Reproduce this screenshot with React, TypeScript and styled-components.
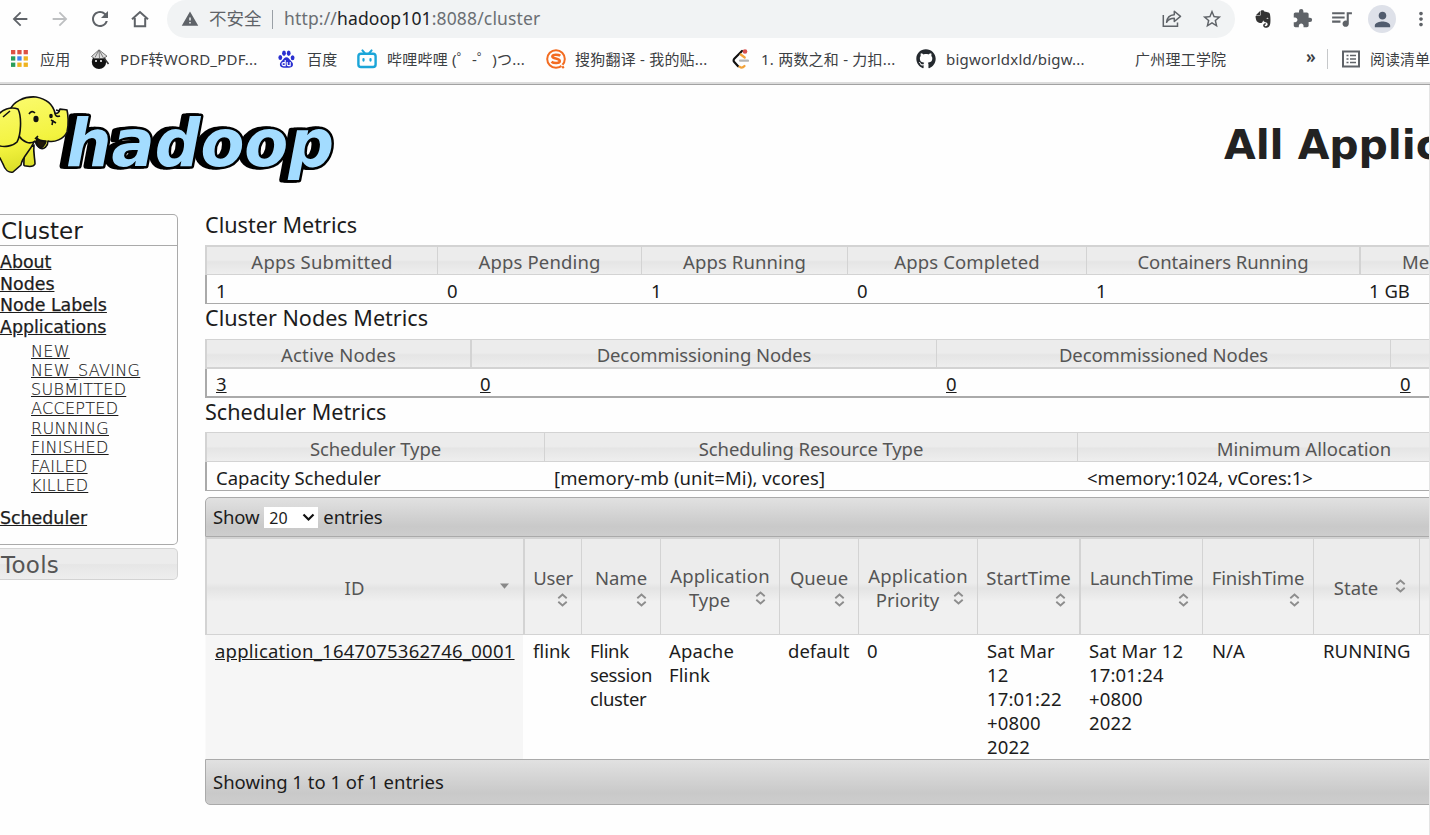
import React from "react";
import styled, { createGlobalStyle } from "styled-components";
import {
  MdArrowBack,
  MdArrowForward,
  MdRefresh,
  MdWarning,
  MdStarBorder,
  MdExtension,
  MdQueueMusic,
  MdPerson,
  MdMoreVert,
} from "react-icons/md";
import { FaEvernote, FaGithub } from "react-icons/fa";

const UI = `"Noto Sans", "Noto Sans CJK SC", sans-serif`;
const VERDANA = `"DejaVu Sans", sans-serif`;

const GlobalStyle = createGlobalStyle`
  * { box-sizing: border-box; }
  html, body { margin: 0; padding: 0; height: 835px; overflow: hidden; background: #fff; }
  body { font-family: ${UI}; color: #1c1c1c; }
  a { color: inherit; }
  svg { display: block; flex: none; }
`;

const Window = styled.div`
  width: 1430px;
  height: 835px;
  overflow: hidden;
  display: flex;
  flex-direction: column;
  background: #fefefe;
`;

/* ---------- browser chrome ---------- */

const NavBar = styled.div`
  height: 38px;
  display: flex;
  align-items: center;
  flex: none;
  color: #5f6368;
`;

const NavButton = styled.span<{ $w: number; $dim?: boolean }>`
  width: ${(p) => p.$w}px;
  height: 38px;
  padding-bottom: 1px;
  display: flex;
  align-items: center;
  justify-content: center;
  flex: none;
  color: ${(p) => (p.$dim ? "#bdbfc1" : "#5f6368")};
`;

const AddressBar = styled.div`
  width: 1068px;
  height: 38px;
  margin-left: 7px;
  padding-left: 14px;
  background: #f1f3f4;
  border-radius: 19px;
  display: flex;
  align-items: center;
  flex: none;
  white-space: nowrap;
`;

const Insecure = styled.span`
  margin-left: 10px;
  width: 63px;
  padding-bottom: 2px;
  font-size: 17.5px;
  line-height: 36px;
  color: #5f6368;
`;

const UrlDivider = styled.span`
  width: 1px;
  height: 19px;
  background: #9aa0a6;
`;

const Url = styled.span`
  flex: 1;
  margin-left: 11px;
  padding-bottom: 2px;
  font-size: 17.5px;
  letter-spacing: 0.15px;
  color: #6b6f73;
  b {
    font-weight: 400;
    color: #202124;
  }
`;

const Avatar = styled.span`
  width: 28px;
  height: 28px;
  margin: 0 14px 0 7px;
  border-radius: 50%;
  background: #dee1e9;
  color: #515c6e;
  display: flex;
  align-items: center;
  justify-content: center;
  flex: none;
`;

const BookmarkBar = styled.div`
  height: 47px;
  padding: 0 0 5px 11px;
  display: flex;
  align-items: center;
  flex: none;
  font-size: 15px;
  color: #3c4043;
  white-space: nowrap;
  border-bottom: 1px solid #a2a2a2;
  box-shadow: inset 0 -2px 0 #dcdcdc;
`;

const Bookmark = styled.span<{ $w: number }>`
  width: ${(p) => p.$w}px;
  display: flex;
  align-items: center;
  flex: none;
  letter-spacing: 0.22px;
`;

const BookmarkIcon = styled.span<{ $w?: number }>`
  width: ${(p) => p.$w ?? 30}px;
  height: 24px;
  display: flex;
  align-items: center;
`;

const More = styled.span`
  width: 22px;
  padding-bottom: 3px;
  font-size: 17px;
  line-height: 20px;
  font-weight: 600;
`;

const BarDivider = styled.span`
  width: 1px;
  height: 20px;
  margin-right: 14px;
  background: #c6c8ca;
`;

/* ---------- page ---------- */

const Page = styled.div`
  flex: 1;
  width: 1430px;
  border-right: 1px solid #e4e4e4;
  overflow: hidden;
`;

const Banner = styled.header`
  height: 129px;
  display: flex;
  justify-content: space-between;
  overflow: hidden;
`;

const Title = styled.h1`
  width: 205px;
  margin: 35px 0 0;
  font: bold 41px/50px ${VERDANA};
  letter-spacing: -0.1px;
  white-space: nowrap;
  color: #222;
`;

const Body = styled.div`
  display: flex;
`;

const Sidebar = styled.nav`
  width: 178px;
  margin-right: 27px;
  flex: none;
  font-family: ${VERDANA};
`;

const Section = styled.div`
  height: 331px;
  border: 1px solid #aaa;
  border-left: 0;
  border-radius: 0 5px 5px 0;
  overflow: hidden;
`;

const SectionTitle = styled.div`
  height: 31px;
  padding-left: 1px;
  border-bottom: 1px solid #aaa;
  font-size: 23px;
  line-height: 32px;
`;

const ClosedSection = styled.div`
  height: 32px;
  margin-top: 3px;
  padding-left: 1px;
  border: 1px solid #d3d3d3;
  border-left: 0;
  border-radius: 0 5px 5px 0;
  background: linear-gradient(#ececec 0 48%, #e6e6e6 52%, #eee);
  font-size: 23px;
  line-height: 33px;
  letter-spacing: 0.3px;
  color: #555;
`;

const Links = styled.div`
  display: flex;
  flex-direction: column;
  align-items: flex-start;
  padding-top: 6px;
  font-size: 17.4px;
  line-height: 21.7px;
  white-space: nowrap;
  text-decoration-thickness: 1px;
  a {
    -webkit-text-stroke: 0.25px #1c1c1c;
  }
`;

const SubLinks = styled.div`
  display: flex;
  flex-direction: column;
  align-items: flex-start;
  margin: 3px 0 13px 31px;
  font-size: 16px;
  line-height: 19.2px;
  font-weight: 200;
  letter-spacing: 0.3px;
  a {
    -webkit-text-stroke: 0.15px #1c1c1c;
  }
`;

const Content = styled.main`
  flex: 1;
  min-width: 0;
  overflow: hidden;
  white-space: nowrap;
  font-size: 18.5px;
`;

const Heading = styled.h3<{ $h: number; $line: number }>`
  height: ${(p) => p.$h}px;
  margin: 0;
  font-size: 21.6px;
  font-weight: 400;
  line-height: ${(p) => p.$line}px;
`;

const MetricTable = styled.div<{ $cols: string; $thick?: boolean }>`
  width: 1600px;
  display: grid;
  grid-template-columns: ${(p) => p.$cols};
  grid-template-rows: 30px ${(p) => (p.$thick ? 27 : 28)}px;
  border-bottom: ${(p) => (p.$thick ? 2 : 1)}px solid #aaa;
`;

const MetricHead = styled.div<{ $top?: number; $bottom?: number; $left?: number; $line?: number; $ls?: number }>`
  border: 0 solid #d3d3d3;
  border-width: ${(p) => `${p.$top ?? 1}px 0 ${p.$bottom ?? 1}px ${p.$left ?? 1}px`};
  &:first-child {
    border-left-width: 2px;
  }
  background: linear-gradient(#ececec 0 48%, #e5e5e5 55%, #eee);
  color: #555;
  text-align: center;
  line-height: ${(p) => p.$line ?? 29}px;
  letter-spacing: ${(p) => p.$ls ?? 0}px;
`;

const MemoryLabel = styled.span`
  display: block;
  padding-left: 41px;
  text-align: left;
`;

const MetricValue = styled.div<{ $first?: boolean; $line?: number; $ls?: number }>`
  padding-left: ${(p) => (p.$first ? 9 : 10)}px;
  border-left: ${(p) => (p.$first ? "2px solid #aaa" : "0")};
  line-height: ${(p) => p.$line ?? 31}px;
  letter-spacing: ${(p) => p.$ls ?? 0}px;
`;

const Toolbar = styled.div<{ $footer?: boolean }>`
  width: 1600px;
  height: ${(p) => (p.$footer ? 46 : 40)}px;
  margin-top: ${(p) => (p.$footer ? 0 : 6)}px;
  padding: 0 0 1px 7px;
  display: flex;
  align-items: center;
  border: 1px solid #aaa;
  border-radius: ${(p) => (p.$footer ? "0 0 5px 5px" : "5px 5px 0 0")};
  background: linear-gradient(#e1e1e1, #c9c9c9 75%, #cdcdcd);
`;

const ToolbarWord = styled.span`
  letter-spacing: -0.15px;
`;

const SelectBox = styled.span`
  width: 54px;
  height: 21px;
  margin: 2px 5px 0 5px;
  padding: 0 3px 0 5px;
  display: flex;
  align-items: center;
  justify-content: space-between;
  background: #fff;
  font-size: 16px;
`;

const AppGrid = styled.div`
  width: 1600px;
  display: grid;
  grid-template-columns: 318px 58px 79px 119px 79px 119px 102px 123px 111px 106px 386px;
  grid-template-rows: 98px 124px;
`;

const AppHead = styled.div<{ $thick?: boolean }>`
  border-left: ${(p) => (p.$thick ? 2 : 1)}px solid #d3d3d3;
  border-top: 2px solid #d3d3d3;
  border-bottom: 1px solid #d3d3d3;
  background: linear-gradient(#ececec 0 46%, #e4e4e4 52%, #f0f0f0 66%);
  color: #555;
  display: flex;
  flex-direction: column;
  justify-content: center;
  padding-top: 3px;
  line-height: 24px;
`;

const HeadLine = styled.div<{ $ls?: number }>`
  text-align: center;
  letter-spacing: ${(p) => p.$ls ?? 0}px;
`;

const SortLine = styled.div<{ $h: number }>`
  height: ${(p) => p.$h}px;
  display: flex;
  align-items: center;
  padding: 0 13px 0 3px;
`;

const SortLabel = styled.span`
  flex: 1;
  text-align: center;
`;

const SortIcon = styled.span<{ $lift: boolean }>`
  padding-bottom: ${(p) => (p.$lift ? 4 : 0)}px;
`;

const AppCell = styled.div<{ $sorted?: boolean; $pad?: number; $ls?: number }>`
  padding: 4px 0 0 ${(p) => p.$pad ?? 9}px;
  background: ${(p) => (p.$sorted ? "#f6f6f6" : "#fefefe")};
  border-left: ${(p) => (p.$sorted ? "1px solid #fafafa" : "0")};
  line-height: 24px;
  white-space: pre;
  letter-spacing: ${(p) => p.$ls ?? 0}px;
`;

/* ---------- drawings ---------- */

const HomeIcon = () => (
  <svg width="18" height="18" viewBox="0 0 18 18" fill="none" stroke="currentColor" strokeWidth="2">
    <path d="M1 9.2 9 2l8 7.2M3.8 8v8.2h10.4V8" />
  </svg>
);

const ShareIcon = () => (
  <svg width="20" height="19" viewBox="0 0 20 19" fill="none" stroke="currentColor" strokeWidth="1.5">
    <path d="M1.3 6v11.2h14.2v-3.7" />
    <path d="M4.6 13.3C5 8.5 8 6 12.3 5.700V2.200l6.200 5.200-6.200 5.100V9.300c-3.600 0-6 1.100-7.700 4z" strokeLinejoin="round" />
  </svg>
);

const AppsIcon = () => {
  const colors = ["#dd5144", "#dd5144", "#dd5144", "#2a9d5c", "#4284f0", "#efb320", "#2a9d5c", "#efb320", "#efb320"];
  return (
    <svg width="17" height="17" viewBox="0 0 17 17">
      {colors.map((c, i) => (
        <rect key={i} x={(i % 3) * 6.3} y={Math.floor(i / 3) * 6.3} width="4.3" height="4.3" fill={c} />
      ))}
    </svg>
  );
};

const PdfIcon = () => (
  <svg width="20" height="20" viewBox="0 0 20 20">
    <circle cx="9" cy="12.8" r="7.200" fill="#111" />
    <path d="M1.500 7.500 9 .8l8 6.400-3.500 2.300-9 .1z" fill="#ddd" stroke="#555" strokeWidth=".8" />
    <path d="M9 1 5 8.500M9 1l.5 8M9 1l4.500 8" stroke="#666" strokeWidth=".8" />
    <path d="m14 9 4.500 6" stroke="#333" strokeWidth="1.500" />
    <circle cx="6" cy="12" r="1" fill="#fff" />
    <circle cx="11" cy="12" r="1" fill="#fff" />
  </svg>
);

const BaiduIcon = () => (
  <svg width="17" height="18" viewBox="0 0 17 18" fill="#2a2fd0">
    <ellipse cx="2.300" cy="7.500" rx="1.900" ry="2.500" />
    <ellipse cx="6" cy="3.200" rx="1.900" ry="2.700" />
    <ellipse cx="10.700" cy="3.200" rx="1.900" ry="2.700" />
    <ellipse cx="14.600" cy="7.800" rx="1.900" ry="2.500" />
    <path d="M8.400 7.300c2 0 2.600 1.700 4.200 3.300 1.700 1.600 2.700 2.700 2.300 4.600-.5 2.200-2.400 2.500-6.500 2.500S2.600 17.500 2 15.200c-.5-2 .8-3 2.300-4.600C5.900 9 6.400 7.300 8.400 7.300z" />
    <path d="M7.200 10v5.600H5.500a1.500 1.500 0 0 1 0-3h1.700M9.200 12v2.500c0 .8.400 1.100 1.100 1.100h1.900V12" fill="none" stroke="#fff" strokeWidth="1.100" />
  </svg>
);

const BiliIcon = () => (
  <svg width="20" height="20" viewBox="0 0 20 20" fill="none" stroke="#1ba5d8" strokeWidth="2.400" strokeLinecap="round">
    <rect x="1.400" y="4.700" width="17.200" height="13.300" rx="2.600" />
    <path d="M5.400 1.400 7.600 4M14.600 1.400 12.400 4" strokeWidth="2" />
    <path d="M6.500 10v1.600M13.500 10v1.600" strokeWidth="2.200" />
  </svg>
);

const SogouIcon = () => (
  <svg width="20" height="20" viewBox="0 0 20 20" fill="none" stroke="#f36c21">
    <circle cx="10" cy="10" r="8.800" strokeWidth="2" />
    <path d="M14.300 6.800c-1.500-1.300-8-2-8 .7 0 2.600 7.500 1.500 7.500 4.500 0 2.800-6.400 2.400-8.300.7" strokeWidth="2.500" />
    <path d="m15.200 15.500 2.500 3" stroke="#fff" strokeWidth="1.500" />
    <circle cx="17" cy="18.300" r="1.200" fill="#f36c21" stroke="none" />
  </svg>
);

const LeetIcon = () => (
  <svg width="17" height="20" viewBox="0 0 17 20" fill="none" strokeLinecap="round" strokeWidth="2.200">
    <path d="m10 2-7.500 7.500c-1.200 1.200-1.200 2.600 0 3.800l3.600 4" stroke="#111" />
    <path d="M7.500 17.700c1.500 1.200 3.500 1 5-.7M8.700 5.500l4 3" stroke="#f2a33a" />
    <path d="M8 11.700h8" stroke="#b3b3b3" />
    <circle cx="13" cy="2.500" r="2.300" fill="#d8504d" />
  </svg>
);

const ReadingIcon = () => (
  <svg width="18" height="18" viewBox="0 0 18 18" fill="none" stroke="#5f6368" strokeWidth="2">
    <rect x="1" y="1.500" width="16" height="15" />
    <path d="M4.500 5.500h2M4.500 9h2M4.500 12.500h2M8 5.500h6M8 9h6M8 12.500h6" strokeWidth="1.500" />
  </svg>
);

const SortBoth = () => (
  <svg width="11" height="14" viewBox="0 0 11 14" fill="none" stroke="#8d8d8d" strokeWidth="1.900">
    <path d="M1.300 5.200 5.500 1.500l4.200 3.700M1.300 8.800l4.200 3.700 4.200-3.700" />
  </svg>
);

const SortDown = () => (
  <svg width="11" height="14" viewBox="0 0 11 14">
    <path d="M1 4.500h9L5.500 9.700z" fill="#888" />
  </svg>
);

const Chevron = () => (
  <svg width="13" height="9" viewBox="0 0 13 9" fill="none" stroke="#111" strokeWidth="2.200">
    <path d="m1.500 1.500 5 5 5-5" />
  </svg>
);

const Wordmark = styled.text`
  font: italic bold 65px ${VERDANA};
  fill: #a3dcff;
  stroke: #000;
  stroke-width: 5px;
  stroke-linejoin: round;
  paint-order: stroke;
  filter: drop-shadow(-3px 0 0 #000) drop-shadow(-3px 0 0 #000);
`;

const Logo = () => (
  <svg width="345" height="110" viewBox="0 0 345 110">
    <defs>
      <linearGradient id="hide" gradientUnits="userSpaceOnUse" x1="10" y1="10" x2="30" y2="90">
        <stop offset="0" stopColor="#fbfb70" />
        <stop offset="0.600" stopColor="#f3f33f" />
        <stop offset="1" stopColor="#d3d820" />
      </linearGradient>
    </defs>
    <Wordmark x="66" y="81" textLength="268" lengthAdjust="spacingAndGlyphs">hadoop</Wordmark>
    <g fill="url(#hide)" stroke="#111" strokeWidth="1.600" strokeLinejoin="round">
      <path d="M24 74c0 6-1 7 2 7 5 1 8 0 9-2 0-6-2-11-1-19l-9 4z" />
      <path d="M-4 57v14l4 2 3 6c2 6 6 9 10 8l8-7c1-8 8-12 13-23l-8-9-20-8z" />
      <path d="M10 25c3-8 14-14 26-13 11 2 17 8 19 16 2 1 4 0 5-4 3 1 5 0 7 1 1 4 2 14 0 22-3 7-13 11-19 9 0 5-4 9-8 7-2-1-4-4-5-7-5 4-12 1-16-5z" />
      <path d="M-2 30c4-5 12-9 20-6 4 8 3 26-1 33-4 4-13 6-20 3z" />
      <path d="M37 53c2 3 5 3 9 3-1 4-4 8-7 6-2-1-3-5-2-9z" fill="#221a08" />
      <path d="M55 28c0 3 2 4 5 3M51 35l5 3M52 40l1-5M29 29c2-3 4-3 6-1M3 32l7-6M35 54l3-3M56 25l4 1" fill="none" />
      <ellipse cx="36" cy="34" rx="1.800" ry="2.500" fill="#111" />
      <ellipse cx="51" cy="31" rx="1" ry="1.500" fill="#111" />
    </g>
  </svg>
);

/* ---------- data ---------- */

const bookmarks: { label: string; w: number; iw: number; icon: React.ReactNode }[] = [
  { label: "应用", w: 79, iw: 29, icon: <AppsIcon /> },
  { label: "PDF转WORD_PDF...", w: 188, iw: 30, icon: <PdfIcon /> },
  { label: "百度", w: 79, iw: 29, icon: <BaiduIcon /> },
  { label: "哔哩哔哩 (゜-゜)つ...", w: 189, iw: 30, icon: <BiliIcon /> },
  { label: "搜狗翻译 - 我的贴...", w: 186, iw: 29, icon: <SogouIcon /> },
  { label: "1. 两数之和 - 力扣...", w: 184, iw: 29, icon: <LeetIcon /> },
  { label: "bigworldxld/bigw...", w: 219, iw: 30, icon: <FaGithub size={20} color="#24292e" /> },
  { label: "广州理工学院", w: 171, iw: 0, icon: null },
];

const states = ["NEW", "NEW_SAVING", "SUBMITTED", "ACCEPTED", "RUNNING", "FINISHED", "FAILED", "KILLED"];

const columns: { lines: string[]; last: string; thick?: boolean; down?: boolean; ls?: number }[] = [
  { lines: [], last: "ID", thick: true, down: true },
  { lines: ["User"], last: "", thick: true, ls: -0.2 },
  { lines: ["Name"], last: "" },
  { lines: ["Application"], last: "Type", ls: 0.2 },
  { lines: ["Queue"], last: "" },
  { lines: ["Application"], last: "Priority", ls: 0.2 },
  { lines: ["StartTime"], last: "" },
  { lines: ["LaunchTime"], last: "", thick: true, ls: -0.25 },
  { lines: ["FinishTime"], last: "", ls: -0.1 },
  { lines: [], last: "State" },
];

const cells: { text: string; pad?: number; ls?: number }[] = [
  { text: "flink", pad: 10 },
  { text: "Flink\nsession\ncluster", ls: -0.35 },
  { text: "Apache\nFlink", ls: 0.1 },
  { text: "default" },
  { text: "0" },
  { text: "Sat Mar\n12\n17:01:22\n+0800\n2022", pad: 10, ls: 0.15 },
  { text: "Sat Mar 12\n17:01:24\n+0800\n2022", pad: 10, ls: 0.15 },
  { text: "N/A", pad: 10 },
  { text: "RUNNING", pad: 10, ls: 0.1 },
  { text: "" },
];

export default function App() {
  return (
    <Window>
      <GlobalStyle />
      <NavBar>
        <NavButton $w={40}><MdArrowBack size={22} /></NavButton>
        <NavButton $w={40} $dim><MdArrowForward size={22} /></NavButton>
        <NavButton $w={40}><MdRefresh size={24} /></NavButton>
        <NavButton $w={40}><HomeIcon /></NavButton>
        <AddressBar>
          <MdWarning size={18} />
          <Insecure>不安全</Insecure>
          <UrlDivider />
          <Url>http://<b>hadoop101</b>:8088/cluster</Url>
          <NavButton $w={40}><ShareIcon /></NavButton>
          <NavButton $w={40}><MdStarBorder size={22} /></NavButton>
          <NavButton $w={3} />
        </AddressBar>
        <NavButton $w={8} />
        <NavButton $w={40}><FaEvernote size={20} color="#333" /></NavButton>
        <NavButton $w={39}><MdExtension size={21} /></NavButton>
        <NavButton $w={39}><MdQueueMusic size={25} /></NavButton>
        <Avatar><MdPerson size={23} /></Avatar>
        <MdMoreVert size={22} />
      </NavBar>
      <BookmarkBar>
        {bookmarks.map((b) => (
          <Bookmark key={b.label} $w={b.w}>
            <BookmarkIcon $w={b.iw}>{b.icon}</BookmarkIcon>
            {b.label}
          </Bookmark>
        ))}
        <More>»</More>
        <BarDivider />
        <BookmarkIcon $w={29}><ReadingIcon /></BookmarkIcon>
        阅读清单
      </BookmarkBar>
      <Page>
        <Banner>
          <Logo />
          <Title>All Applications</Title>
        </Banner>
        <Body>
          <Sidebar>
            <Section>
              <SectionTitle>Cluster</SectionTitle>
              <Links>
                {["About", "Nodes", "Node Labels", "Applications"].map((l) => (
                  <a key={l} href="#">{l}</a>
                ))}
                <SubLinks>
                  {states.map((s) => (
                    <a key={s} href="#">{s}</a>
                  ))}
                </SubLinks>
                <a href="#">Scheduler</a>
              </Links>
            </Section>
            <ClosedSection>Tools</ClosedSection>
          </Sidebar>
          <Content>
            <Heading $h={31} $line={21}>Cluster Metrics</Heading>
            <MetricTable $cols="232px 204px 206px 239px 273px 446px">
              <MetricHead $top={2} $ls={0.2}>Apps Submitted</MetricHead>
              <MetricHead $top={2} $ls={0.15}>Apps Pending</MetricHead>
              <MetricHead $top={2} $ls={0.1}>Apps Running</MetricHead>
              <MetricHead $top={2} $ls={0.15}>Apps Completed</MetricHead>
              <MetricHead $top={2} $ls={-0.1}>Containers Running</MetricHead>
              <MetricHead $top={2} $left={2}>
                <MemoryLabel>Memory Used</MemoryLabel>
              </MetricHead>
              <MetricValue $first>1</MetricValue>
              <MetricValue>0</MetricValue>
              <MetricValue>1</MetricValue>
              <MetricValue>0</MetricValue>
              <MetricValue>1</MetricValue>
              <MetricValue>1 GB</MetricValue>
            </MetricTable>
            <Heading $h={35} $line={27}>Cluster Nodes Metrics</Heading>
            <MetricTable $cols="265px 466px 454px 415px" $thick>
              <MetricHead $bottom={2} $ls={0.2}>Active Nodes</MetricHead>
              <MetricHead $bottom={2} $left={2} $ls={-0.1}>Decommissioning Nodes</MetricHead>
              <MetricHead $bottom={2} $ls={-0.1}>Decommissioned Nodes</MetricHead>
              <MetricHead $bottom={2} />
              <MetricValue $line={29} $first><a href="#">3</a></MetricValue>
              <MetricValue $line={29}><a href="#">0</a></MetricValue>
              <MetricValue $line={29}><a href="#">0</a></MetricValue>
              <MetricValue $line={29}><a href="#">0</a></MetricValue>
            </MetricTable>
            <Heading $h={34} $line={27}>Scheduler Metrics</Heading>
            <MetricTable $cols="339px 533px 453px 275px">
              <MetricHead $line={31} $ls={-0.1}>Scheduler Type</MetricHead>
              <MetricHead $line={31} $ls={-0.1}>Scheduling Resource Type</MetricHead>
              <MetricHead $line={31}>Minimum Allocation</MetricHead>
              <MetricHead />
              <MetricValue $first>Capacity Scheduler</MetricValue>
              <MetricValue $ls={0.1}>[memory-mb (unit=Mi), vcores]</MetricValue>
              <MetricValue>&lt;memory:1024, vCores:1&gt;</MetricValue>
              <MetricValue />
            </MetricTable>
            <Toolbar>
              <ToolbarWord>Show</ToolbarWord>
              <SelectBox>20<Chevron /></SelectBox>
              <ToolbarWord>entries</ToolbarWord>
            </Toolbar>
            <AppGrid>
              {columns.map((c, i) => (
                <AppHead key={i} $thick={c.thick}>
                  {c.lines.map((l) => (
                    <HeadLine key={l} $ls={c.ls}>{l}</HeadLine>
                  ))}
                  <SortLine $h={c.last ? 24 : 20}>
                    <SortLabel>{c.last}</SortLabel>
                    <SortIcon $lift={!!c.last}>{c.down ? <SortDown /> : <SortBoth />}</SortIcon>
                  </SortLine>
                </AppHead>
              ))}
              <AppHead />
              <AppCell $sorted $ls={0.24}><a href="#">application_1647075362746_0001</a></AppCell>
              {cells.map((c, i) => (
                <AppCell key={i} $pad={c.pad} $ls={c.ls}>{c.text}</AppCell>
              ))}
            </AppGrid>
            <Toolbar $footer>Showing 1 to 1 of 1 entries</Toolbar>
          </Content>
        </Body>
      </Page>
    </Window>
  );
}
